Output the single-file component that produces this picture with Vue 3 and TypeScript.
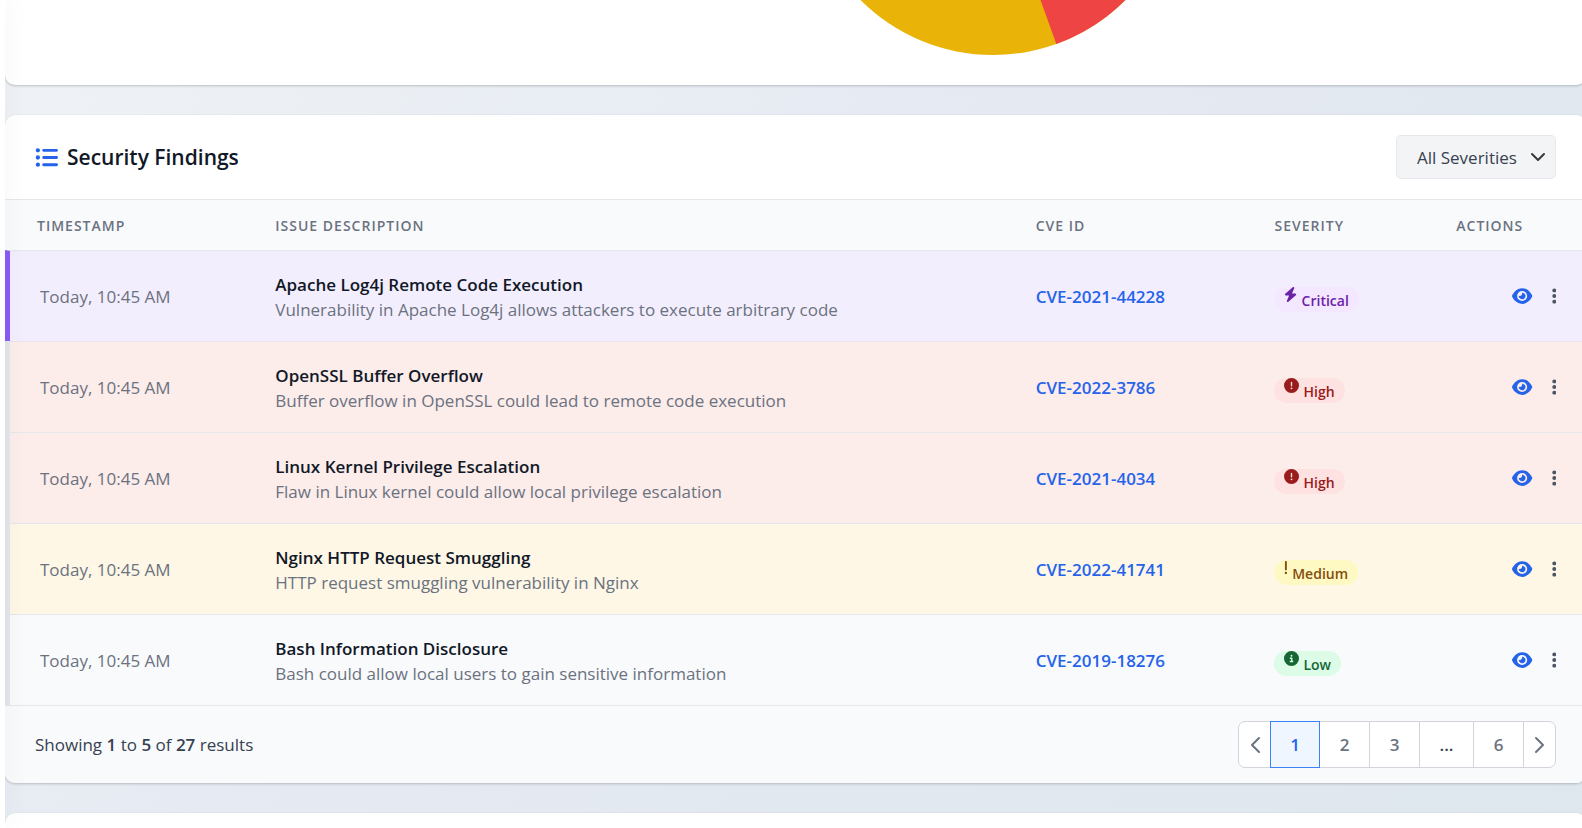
<script setup lang="ts">
import { ref } from 'vue'

type Level = 'critical' | 'high' | 'medium' | 'low'

interface Finding {
  time: string
  title: string
  detail: string
  cve: string
  level: Level
}

const findings: Finding[] = [
  { time: 'Today, 10:45 AM', title: 'Apache Log4j Remote Code Execution', detail: 'Vulnerability in Apache Log4j allows attackers to execute arbitrary code', cve: 'CVE-2021-44228', level: 'critical' },
  { time: 'Today, 10:45 AM', title: 'OpenSSL Buffer Overflow', detail: 'Buffer overflow in OpenSSL could lead to remote code execution', cve: 'CVE-2022-3786', level: 'high' },
  { time: 'Today, 10:45 AM', title: 'Linux Kernel Privilege Escalation', detail: 'Flaw in Linux kernel could allow local privilege escalation', cve: 'CVE-2021-4034', level: 'high' },
  { time: 'Today, 10:45 AM', title: 'Nginx HTTP Request Smuggling', detail: 'HTTP request smuggling vulnerability in Nginx', cve: 'CVE-2022-41741', level: 'medium' },
  { time: 'Today, 10:45 AM', title: 'Bash Information Disclosure', detail: 'Bash could allow local users to gain sensitive information', cve: 'CVE-2019-18276', level: 'low' },
]

const levels: Record<Level, { label: string; box: string; path: string }> = {
  critical: {
    label: 'Critical',
    box: '0 0 448 512',
    path: 'M349.4 44.6c5.9-13.7 1.5-29.7-10.6-38.5s-28.6-8-39.9 1.8l-256 224c-10 8.8-13.6 22.9-8.9 35.3S50.7 288 64 288H175.5L98.6 467.4c-5.9 13.7-1.5 29.7 10.6 38.5s28.6 8 39.9-1.8l256-224c10-8.8 13.6-22.9 8.9-35.3s-16.6-20.7-30-20.7H272.5L349.4 44.6z',
  },
  high: {
    label: 'High',
    box: '0 0 512 512',
    path: 'M256 512A256 256 0 1 0 256 0a256 256 0 1 0 0 512zm0-384c13.3 0 24 10.7 24 24V264c0 13.3-10.7 24-24 24s-24-10.7-24-24V152c0-13.3 10.7-24 24-24zM224 352a32 32 0 1 1 64 0 32 32 0 1 1 -64 0z',
  },
  medium: {
    label: 'Medium',
    box: '0 0 128 512',
    path: 'M96 64c0-17.7-14.3-32-32-32S32 46.3 32 64V320c0 17.7 14.3 32 32 32s32-14.3 32-32V64zM64 480a40 40 0 1 0 0-80 40 40 0 1 0 0 80z',
  },
  low: {
    label: 'Low',
    box: '0 0 512 512',
    path: 'M256 512A256 256 0 1 0 256 0a256 256 0 1 0 0 512zM216 336h24V272H216c-13.3 0-24-10.7-24-24s10.7-24 24-24h48c13.3 0 24 10.7 24 24v88h8c13.3 0 24 10.7 24 24s-10.7 24-24 24H216c-13.3 0-24-10.7-24-24s10.7-24 24-24zm40-208a32 32 0 1 1 0 64 32 32 0 1 1 0-64z',
  },
}

const severity = ref('all')
const page = ref(1)
</script>

<template>
  <div class="page">
    <div class="rail"></div>
    <main class="content">
      <section class="card chart">
        <svg class="pie" viewBox="0 0 374 55" role="img" aria-label="Severity distribution">
          <circle cx="187" cy="-132" r="187" fill="#eab308" />
          <path d="M187-132L250.300 43.960A187 187 0 0 0 374-132Z" fill="#ef4444" />
        </svg>
      </section>

      <section class="card">
        <header class="head">
          <h2 class="heading">
            <svg class="list" viewBox="0 0 512 512" aria-hidden="true">
              <path d="M64 144a48 48 0 1 0 0-96 48 48 0 1 0 0 96zM192 64c-17.7 0-32 14.3-32 32s14.3 32 32 32H480c17.7 0 32-14.3 32-32s-14.3-32-32-32H192zm0 160c-17.7 0-32 14.3-32 32s14.3 32 32 32H480c17.7 0 32-14.3 32-32s-14.3-32-32-32H192zm0 160c-17.7 0-32 14.3-32 32s14.3 32 32 32H480c17.7 0 32-14.3 32-32s-14.3-32-32-32H192zM64 464a48 48 0 1 0 0-96 48 48 0 1 0 0 96zm48-208a48 48 0 1 0 -96 0 48 48 0 1 0 96 0z" />
            </svg>
            Security Findings
          </h2>
          <div class="filter">
            <select v-model="severity" aria-label="Severity filter">
              <option value="all">All Severities</option>
              <option v-for="(l, key) in levels" :key="key" :value="key">{{ l.label }}</option>
            </select>
            <svg class="caret" viewBox="0 0 16 16" aria-hidden="true"><path d="M2 5l6 6 6-6" /></svg>
          </div>
        </header>

        <table>
          <thead>
            <tr>
              <th class="c-time">Timestamp</th>
              <th class="c-issue">Issue Description</th>
              <th class="c-cve">CVE ID</th>
              <th class="c-sev">Severity</th>
              <th class="c-act">Actions</th>
            </tr>
          </thead>
          <tbody>
            <tr v-for="f in findings" :key="f.cve" :class="f.level">
              <td class="time">{{ f.time }}</td>
              <td class="issue">
                <div class="title">{{ f.title }}</div>
                <div class="detail">{{ f.detail }}</div>
              </td>
              <td><a href="#" class="cve">{{ f.cve }}</a></td>
              <td>
                <span class="badge">
                  <svg :viewBox="levels[f.level].box" aria-hidden="true"><path :d="levels[f.level].path" /></svg>
                  <span>{{ levels[f.level].label }}</span>
                </span>
              </td>
              <td>
                <div class="actions">
                  <button type="button" class="view" :aria-label="'View ' + f.cve">
                    <svg viewBox="0 0 576 512" aria-hidden="true">
                      <path d="M288 32c-80.8 0-145.5 36.8-192.600 80.600C48.600 156 17.300 208 2.500 243.700c-3.300 7.900-3.300 16.700 0 24.600C17.300 304 48.600 356 95.400 399.400C142.500 443.200 207.200 480 288 480s145.500-36.800 192.600-80.600c46.800-43.500 78.100-95.400 93-131.100c3.300-7.900 3.300-16.700 0-24.600c-14.900-35.700-46.200-87.700-93-131.100C433.500 68.800 368.800 32 288 32zM144 256a144 144 0 1 1 288 0 144 144 0 1 1 -288 0zm144-64c0 35.300-28.700 64-64 64c-7.100 0-13.900-1.200-20.300-3.300c-5.500-1.800-11.900 1.600-11.700 7.400c.3 6.900 1.300 13.800 3.200 20.700c13.700 51.200 66.400 81.600 117.600 67.900s81.600-66.400 67.900-117.600c-11.100-41.500-47.800-69.400-88.600-71.100c-5.800-.2-9.200 6.100-7.400 11.700c2.100 6.400 3.300 13.200 3.300 20.300z" />
                    </svg>
                  </button>
                  <button type="button" class="more" :aria-label="'More actions for ' + f.cve">
                    <svg viewBox="0 0 128 512" aria-hidden="true">
                      <path d="M64 360a56 56 0 1 0 0 112 56 56 0 1 0 0-112zm0-160a56 56 0 1 0 0 112 56 56 0 1 0 0-112zM120 96A56 56 0 1 0 8 96a56 56 0 1 0 112 0z" />
                    </svg>
                  </button>
                </div>
              </td>
            </tr>
          </tbody>
        </table>

        <footer class="foot">
          <p>Showing <b>1</b> to <b>5</b> of <b>27</b> results</p>
          <nav class="pager" aria-label="Pagination">
            <button type="button" class="step" aria-label="Previous page">
              <svg viewBox="0 0 12 18" aria-hidden="true"><path d="M10 2L3 9l7 7" /></svg>
            </button>
            <button type="button" :class="{ on: page === 1 }" @click="page = 1">1</button>
            <button type="button" :class="{ on: page === 2 }" @click="page = 2">2</button>
            <button type="button" :class="{ on: page === 3 }" @click="page = 3">3</button>
            <span class="dots">...</span>
            <button type="button" :class="{ on: page === 6 }" @click="page = 6">6</button>
            <button type="button" class="step" aria-label="Next page">
              <svg viewBox="0 0 12 18" aria-hidden="true"><path d="M2 2l7 7-7 7" /></svg>
            </button>
          </nav>
        </footer>
      </section>

      <section class="card next"></section>
    </main>
  </div>
</template>

<style>
body {
  margin: 0;
}
</style>

<style scoped>
* {
  box-sizing: border-box;
}
.page {
  display: flex;
  height: 100vh;
  overflow: hidden;
  font-family: "Open Sans", "Noto Sans", sans-serif;
  font-size: 17px;
  line-height: 25px;
  color: #374151;
}
.rail {
  position: relative;
  z-index: 1;
  flex: none;
  width: 5px;
  background: #fff;
  box-shadow: 0 0 24px rgba(0, 0, 0, 0.1);
}
.content {
  flex: 1;
  min-width: 0;
  display: flex;
  flex-direction: column;
  gap: 30px;
  margin-right: -4px;
  background: linear-gradient(135deg, #eff3f6 0%, #e4e9f2 50%, #dfe7ee 100%);
}
.card {
  flex: none;
  background: #fff;
  border-radius: 10px;
  overflow: hidden;
  box-shadow: 0 1px 3px rgba(0, 0, 0, 0.14), 0 1px 2px rgba(0, 0, 0, 0.08);
}
.chart {
  display: flex;
  justify-content: center;
  padding: 0 0 30px 394px;
  border-radius: 0 0 10px 10px;
}
.pie {
  display: block;
  width: 374px;
  height: 55px;
}
.next {
  flex: 1;
  border-radius: 10px 10px 0 0;
}
.head {
  display: flex;
  align-items: center;
  justify-content: space-between;
  padding: 20px 30px;
}
.heading {
  display: flex;
  align-items: center;
  gap: 9px;
  margin: 0;
  font-size: 21px;
  line-height: 32px;
  font-weight: 600;
  color: #111827;
}
.list {
  width: 23px;
  height: 23px;
  fill: #2563eb;
}
.filter {
  position: relative;
}
.filter select {
  appearance: none;
  display: block;
  width: 160px;
  height: 44px;
  padding: 0 32px 0 20px;
  border: 1px solid #e5e7eb;
  border-radius: 5px;
  background: #f3f4f6;
  font: inherit;
  color: #374151;
}
.caret {
  position: absolute;
  right: 10px;
  top: 14px;
  width: 16px;
  height: 16px;
  fill: none;
  stroke: #343a40;
  stroke-width: 2;
  stroke-linecap: round;
  stroke-linejoin: round;
  pointer-events: none;
}
table {
  width: 100%;
  table-layout: fixed;
  border-collapse: separate;
  border-spacing: 0;
}
th {
  height: 51px;
  padding: 0 30px;
  border-top: 1px solid #e5e7eb;
  background: #f9fafc;
  text-align: left;
  text-transform: uppercase;
  font-size: 14px;
  font-weight: 600;
  letter-spacing: 1px;
  color: #6b7280;
}
.c-time {
  width: 15.2%;
  padding-left: 32px;
}
.c-issue {
  width: 48.1%;
}
.c-cve {
  width: 15.1%;
}
.c-sev {
  width: 11.5%;
}
td {
  height: 91px;
  padding: 0 30px;
  border-top: 1px solid #e5e7eb;
}
.issue {
  padding-top: 2px;
}
.time {
  border-left: 5px solid #e2e5e9;
  color: #6b7280;
}
.title {
  font-weight: 600;
  color: #111827;
}
.detail {
  color: #6b7280;
}
.cve {
  font-weight: 600;
  color: #2563eb;
  text-decoration: none;
}
.critical td {
  background: #f3eefd;
}
.critical .time {
  border-left-color: #8b5cf6;
}
.high td {
  background: #fcecea;
}
.medium td {
  background: #fef7e6;
}
.low td {
  background: #f9fafc;
}
.badge {
  display: inline-flex;
  align-items: flex-start;
  gap: 4px;
  height: 25px;
  margin-top: 6px;
  padding: 0 10px;
  border-radius: 13px;
  font-size: 14px;
  font-weight: 600;
  vertical-align: middle;
}
.badge svg {
  height: 15px;
  fill: currentColor;
}
.badge span {
  padding-top: 1px;
}
.critical .badge {
  background: #f3e8ff;
  color: #6b21a8;
}
.high .badge {
  background: #fee2e2;
  color: #991b1b;
}
.medium .badge {
  background: #fef9c3;
  color: #854d0e;
}
.low .badge {
  background: #dcfce7;
  color: #166534;
}
.actions {
  display: flex;
  justify-content: flex-end;
  align-items: center;
  gap: 19px;
}
.actions button {
  padding: 0;
  border: 0;
  background: none;
}
.actions svg {
  display: block;
  height: 18px;
  fill: currentColor;
}
.view {
  color: #2563eb;
}
.more {
  color: #4b5563;
}
.foot {
  display: flex;
  align-items: center;
  justify-content: space-between;
  padding: 15px 30px;
  border-top: 1px solid #e5e7eb;
  background: #f9fafc;
}
.foot p {
  margin: 0;
}
.foot b {
  font-weight: 600;
}
.pager {
  display: flex;
}
.pager button,
.pager span {
  display: flex;
  align-items: center;
  justify-content: center;
  width: 51px;
  height: 47px;
  margin-left: -1px;
  padding: 0;
  border: 1px solid #d1d5db;
  background: #fff;
  font: inherit;
  font-weight: 600;
  color: #6b7280;
}
.pager span.dots {
  width: 55px;
  color: #374151;
}
.pager button.step {
  width: 33px;
}
.pager button:first-child {
  margin-left: 0;
  border-radius: 7px 0 0 7px;
}
.pager button:last-child {
  border-radius: 0 7px 7px 0;
}
.pager button.on {
  position: relative;
  width: 50px;
  border-color: #3b82f6;
  background: #eff6ff;
  color: #2563eb;
}
.pager svg {
  width: 12px;
  height: 18px;
  fill: none;
  stroke: #6b7280;
  stroke-width: 2;
  stroke-linecap: round;
  stroke-linejoin: round;
}
</style>
